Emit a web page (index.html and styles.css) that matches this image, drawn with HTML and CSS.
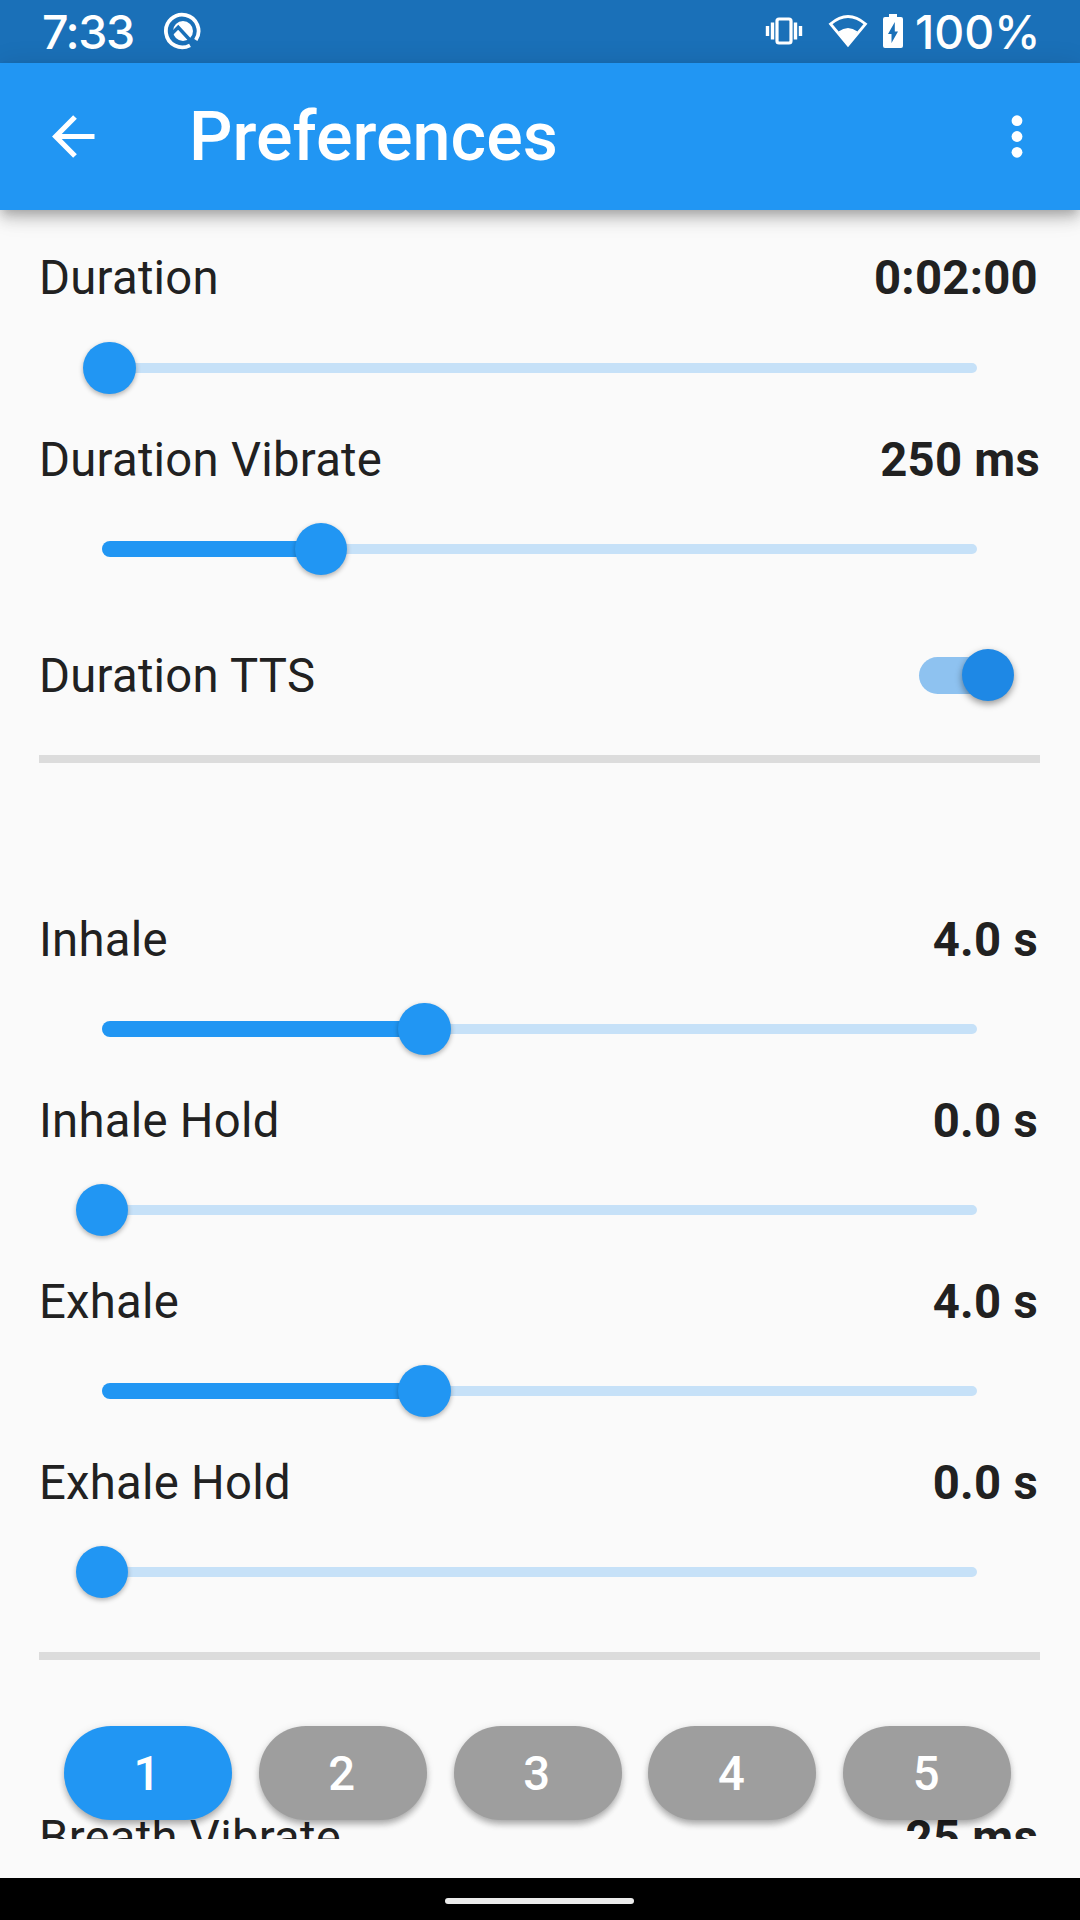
FILE: index.html
```html
<!DOCTYPE html>
<html lang="en">

<head>
    <meta charset="UTF-8">
    <meta name="viewport" content="width=device-width, initial-scale=1.0">
    <title>Preferences</title>
    <link rel="stylesheet" href="styles.css">
</head>

<body>
    <div class="status">
        <span class="clock">7:33</span>
        <svg class="q-icon" width="38" height="38" viewBox="0 0 38 38">
            <path d="M26 33.300A16.300 16.300 0 1 1 31.800 28" fill="none" stroke="#fff" stroke-width="3.800"/>
            <circle cx="19" cy="19" r="10" fill="#fff"/>
            <path d="M7.500 22L14.200 15.300L30.500 33" fill="none" stroke="#1a70b8" stroke-width="3.400"/>
        </svg>
        <div class="status-right">
            <svg class="vibrate" width="38" height="28" viewBox="0 0 38 28">
                <rect x="12" y="2" width="14" height="24" rx="2" fill="none" stroke="#fff" stroke-width="3.200"/>
                <path d="M7.500 5.500v17M30.500 5.500v17M2.500 9v10M35.500 9v10" stroke="#fff" stroke-width="3.400"/>
            </svg>
            <svg class="wifi" width="40" height="34" viewBox="0 0 40 34">
                <path d="M2.500 10Q20-5 37.500 10L20 31Z" fill="none" stroke="#fff" stroke-width="2.800"/>
                <path d="M10.500 17.500Q20 10.500 29.500 17.500L20 31.500Z" fill="#fff"/>
            </svg>
            <svg class="battery" width="20" height="34" viewBox="0 0 20 34">
                <path d="M6 0h8v3h4q2 0 2 2v27q0 2-2 2H2q-2 0-2-2V5q0-2 2-2h4z" fill="#fff"/>
                <path d="M11.800 8v9.500H15L8.500 29v-9H5z" fill="#1a70b8"/>
            </svg>
            <span class="percent">100%</span>
        </div>
    </div>

    <header class="appbar">
        <svg class="back" width="43" height="43" viewBox="0 0 43 43">
            <path d="M42.500 21.500H4M23 2L3.700 21.500L23 41" fill="none" stroke="#fff" stroke-width="5.200"/>
        </svg>
        <h1>Preferences</h1>
        <svg class="more" width="12" height="43" viewBox="0 0 12 43">
            <circle cx="6" cy="5.700" r="5.400" fill="#fff"/>
            <circle cx="6" cy="21.500" r="5.400" fill="#fff"/>
            <circle cx="6" cy="37.300" r="5.400" fill="#fff"/>
        </svg>
    </header>

    <main>
        <div class="list">
            <section>
                <div class="row"><span>Duration</span><b>0:02:00</b></div>
                <div class="slider"><div class="track"><div class="fill" style="width:0.84%"></div></div></div>
                <div class="row low"><span>Duration Vibrate</span><b class="wide">250 ms</b></div>
                <div class="slider"><div class="track"><div class="fill" style="width:25%"></div></div></div>
                <div class="row tall"><span>Duration TTS</span><div class="switch"></div></div>
            </section>
            <hr>
            <section class="spaced">
                <div class="row low"><span>Inhale</span><b>4.0 s</b></div>
                <div class="slider"><div class="track"><div class="fill" style="width:36.84%"></div></div></div>
                <div class="row low"><span>Inhale Hold</span><b>0.0 s</b></div>
                <div class="slider"><div class="track"><div class="fill" style="width:0%"></div></div></div>
                <div class="row low"><span>Exhale</span><b>4.0 s</b></div>
                <div class="slider"><div class="track"><div class="fill" style="width:36.84%"></div></div></div>
                <div class="row low"><span>Exhale Hold</span><b>0.0 s</b></div>
                <div class="slider"><div class="track"><div class="fill" style="width:0%"></div></div></div>
            </section>
            <hr>
            <section class="spaced">
                <div class="row lower"><span>Breath Vibrate</span><b>25 ms</b></div>
            </section>
        </div>
        <!-- preset buttons float over the list -->
        <div class="presets">
            <button class="active">1</button>
            <button>2</button>
            <button>3</button>
            <button>4</button>
            <button>5</button>
        </div>
    </main>

    <footer class="navbar"><div class="pill"></div></footer>
</body>

</html>
```

FILE: styles.css
```css
* {
    box-sizing: border-box;
}

body {
    margin: 0;
    width: 1080px;
    height: 1920px;
    overflow: hidden;
    display: flex;
    flex-direction: column;
    background-color: #fafafa;
    color: #212121;
    font-family: Roboto, sans-serif;
    font-size: 47.25px;
}

svg {
    display: block;
    flex: none;
}

.status {
    height: 63px;
    flex: none;
    display: flex;
    align-items: flex-start;
    padding: 0 43px 0 42px;
    background-color: #1a70b8;
    color: white;
    font-family: Inter, sans-serif;
    font-weight: 500;
    font-size: 46.5px;
    line-height: 65px;
}

.clock {
    width: 122px;
    letter-spacing: -1.4px;
}

.q-icon {
    margin-top: 12px;
}

.status-right {
    margin-left: auto;
    display: flex;
}

.vibrate {
    margin: 17px 25px 0 0;
}

.wifi {
    margin: 14px 15px 0 0;
}

.battery {
    margin: 14px 12px 0 0;
}

.percent {
    width: 122px;
    white-space: nowrap;
}

.appbar {
    height: 147px;
    flex: none;
    display: flex;
    align-items: center;
    padding: 0 57px 0 52px;
    background-color: #2196f3;
    color: white;
    position: relative;
    box-shadow: 0 5px 10px -3px rgba(0, 0, 0, .2), 0 10px 13px 0 rgba(0, 0, 0, .14), 0 3px 26px 0 rgba(0, 0, 0, .12);
}

h1 {
    margin: 0 auto 0 94px;
    font-size: 68.25px;
    font-weight: 500;
    line-height: 80px;
}

main {
    flex: 1;
    min-height: 0;
    padding: 40px 40px 39px 39px;
    position: relative;
}

.list {
    height: 100%;
    overflow: hidden;
}

.row {
    height: 55px;
    line-height: 58px;
    letter-spacing: .26px;
    display: flex;
    justify-content: space-between;
    align-items: center;
}

.row b {
    font-weight: 700;
    margin-right: 2px;
}

.row .wide {
    margin-right: 0;
}

.row span,
.row b {
    padding-top: 1px;
}

.low span,
.low b {
    padding-top: 3px;
}

.lower span,
.lower b {
    padding-top: 5px;
}

.tall {
    height: 126px;
}

.slider {
    height: 126px;
    padding: 0 63px;
    display: flex;
    align-items: center;
}

.track {
    width: 100%;
    height: 10px;
    border-radius: 5px;
    background-color: #c6e1f8;
    display: flex;
    align-items: center;
}

.fill {
    height: 16px;
    border-radius: 8px 0 0 8px;
    background-color: #2196f3;
    display: flex;
    justify-content: flex-end;
    align-items: center;
}

.fill::after {
    content: "";
    flex: none;
    width: 52.5px;
    height: 52.5px;
    margin-right: -26.25px;
    border-radius: 50%;
    background-color: #2196f3;
    box-shadow: 0 2px 5px rgba(0, 0, 0, .3);
}

.switch {
    width: 87px;
    height: 37px;
    margin-right: 34px;
    border-radius: 19px;
    background-color: #8ec2f0;
    display: flex;
    justify-content: flex-end;
    align-items: center;
}

.switch::after {
    content: "";
    flex: none;
    width: 52.5px;
    height: 52.5px;
    margin-right: -8px;
    border-radius: 50%;
    background-color: #1e88e5;
    box-shadow: 0 3px 7px rgba(0, 0, 0, .4);
}

hr {
    height: 8px;
    margin: 17px 0;
    border: 0;
    background-color: #dcdcdc;
}

.spaced {
    padding-top: 131px;
}

.presets {
    position: absolute;
    left: 64px;
    bottom: 58px;
    display: flex;
    gap: 26.8px;
}

.presets button {
    width: 168px;
    height: 94px;
    padding: 2px 2px 0 0;
    border: 0;
    border-radius: 47px;
    background-color: #9e9e9e;
    color: white;
    font-family: inherit;
    font-size: 47.25px;
    font-weight: 500;
    box-shadow: 0 6px 8px -3px rgba(0, 0, 0, .2), 0 4px 6px rgba(0, 0, 0, .14), 0 1px 8px rgba(0, 0, 0, .1);
}

.presets .active {
    background-color: #2196f3;
}

.navbar {
    height: 42px;
    flex: none;
    display: flex;
    justify-content: center;
    align-items: center;
    padding: 4px 2px 0 0;
    background-color: black;
}

.pill {
    width: 189px;
    height: 6px;
    border-radius: 3px;
    background-color: #ebebeb;
}
```
